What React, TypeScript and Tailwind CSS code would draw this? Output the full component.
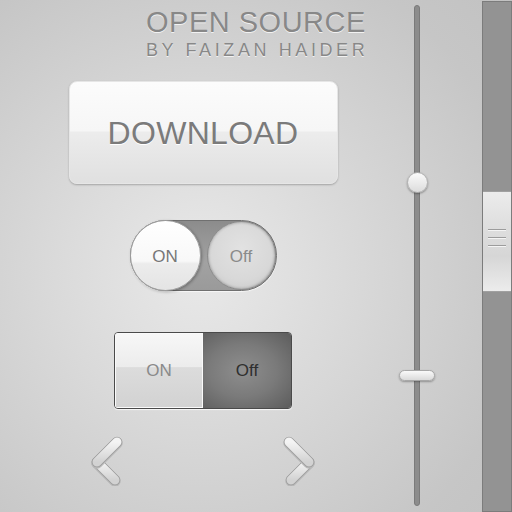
import React from "react";

const font = { fontFamily: '"Liberation Sans", Arial, sans-serif' };

function Chevron({ dir }: { dir: "left" | "right" }) {
  const pts =
    dir === "left"
      ? [
          [6, 26, 24, 44],
          [26, 6, 6, 26],
        ]
      : [
          [26, 26, 8, 44],
          [6, 6, 26, 26],
        ];
  const id = `cg-${dir}`;
  return (
    <svg width="32" height="50" viewBox="0 0 32 50">
      <defs>
        <linearGradient id={id} x1="0" y1="0" x2="0" y2="1">
          <stop offset="0" stopColor="#f4f4f4" />
          <stop offset="1" stopColor="#d2d2d2" />
        </linearGradient>
      </defs>
      {pts.map((p, i) => (
        <g key={i}>
          <line x1={p[0]} y1={p[1] + 1} x2={p[2]} y2={p[3] + 1} stroke="#b8b8b8" strokeWidth="11.5" strokeLinecap="round" />
          <line x1={p[0]} y1={p[1]} x2={p[2]} y2={p[3]} stroke="#9a9a9a" strokeWidth="10.5" strokeLinecap="round" />
          <line x1={p[0]} y1={p[1]} x2={p[2]} y2={p[3]} stroke={`url(#${id})`} strokeWidth="9" strokeLinecap="round" />
        </g>
      ))}
    </svg>
  );
}

export default function App() {
  return (
    <div
      className="w-[512px] h-[512px] flex overflow-hidden bg-[radial-gradient(circle_at_200px_270px,#e9e9e9_0%,#dadada_35%,#c6c6c6_80%,#c2c2c2_100%)]"
      style={font}
    >
      {/* Left column */}
      <div className="w-[406px] flex flex-col items-center">
        {/* Title */}
        <div className="self-start ml-[146px] mt-[8px] flex flex-col items-start text-[#888888] [text-shadow:0_1px_0_#f2f2f2]">
          <div className="text-[29px] leading-[29px] tracking-[0.5px]">OPEN SOURCE</div>
          <div className="text-[18px] leading-[18px] tracking-[3.6px] mt-[4px]">BY FAIZAN HAIDER</div>
        </div>

        {/* Download button */}
        <div className="mt-[22px] w-[269px] h-[103px] rounded-[8px] border border-[#e6e6e6] shadow-[0_1px_2px_rgba(0,0,0,0.25)] bg-[linear-gradient(to_bottom,#fcfcfc_0%,#f6f6f6_48%,#ececec_50%,#e0e0e0_100%)] flex items-center justify-center">
          <span className="text-[32px] text-[#7b7b7b] [text-shadow:0_1px_0_#ffffff] tracking-[0.3px]">DOWNLOAD</span>
        </div>

        {/* Round toggle */}
        <div className="mt-[36px] w-[147px] h-[71px] rounded-full relative border border-[#707070] bg-[linear-gradient(to_bottom,#8c8c8c,#a2a2a2_60%,#9a9a9a)] shadow-[0_1px_1px_rgba(255,255,255,0.7)]">
          <div className="absolute left-[-1px] top-[-1px] w-[71px] h-[71px] pt-[2px] rounded-full border border-[#a0a0a0] bg-[linear-gradient(to_bottom,#ffffff_0%,#f8f8f8_58%,#ececec_62%,#e4e4e4_100%)] shadow-[1px_1px_3px_rgba(0,0,0,0.3)] flex items-center justify-center">
            <span className="text-[17px] text-[#777]">ON</span>
          </div>
          <div className="absolute right-0 top-0 w-[69px] h-[69px] pt-[2px] rounded-full border border-[#8a8a8a] bg-[radial-gradient(circle_at_50%_40%,#e2e2e2_0%,#d8d8d8_60%,#c4c4c4_100%)] shadow-[inset_0_0_3px_rgba(0,0,0,0.35)] flex items-center justify-center">
            <span className="text-[17px] text-[#8a8a8a]">Off</span>
          </div>
        </div>

        {/* Square toggle */}
        <div className="mt-[41px] w-[178px] h-[77px] rounded-[4px] border border-[#4a4a4a] flex overflow-hidden shadow-[0_1px_1px_rgba(255,255,255,0.8)]">
          <div className="w-[88px] h-full border border-[#fafafa] bg-[linear-gradient(to_bottom,#f7f7f7_0%,#ececec_45%,#dcdcdc_46%,#d2d2d2_100%)] flex items-center justify-center">
            <span className="text-[17px] text-[#8a8a8a]">ON</span>
          </div>
          <div className="flex-1 h-full bg-[radial-gradient(ellipse_at_45%_50%,#8e8e8e_0%,#7a7a7a_50%,#5c5c5c_100%)] flex items-center justify-center">
            <span className="text-[17px] text-[#2f2f2f]">Off</span>
          </div>
        </div>

        {/* Arrows */}
        <div className="mt-[27px] w-[224px] flex justify-between">
          <Chevron dir="left" />
          <Chevron dir="right" />
        </div>
      </div>

      {/* Slider column */}
      <div className="w-[76px] relative">
        <div className="ml-[8px] mt-[5px] w-[6px] h-[501px] rounded-full bg-[#8c8c8c] border border-[#7a7a7a]" />
        <div className="absolute left-[1px] top-[172px] w-[21px] h-[21px] rounded-full border border-[#b0b0b0] bg-[linear-gradient(to_bottom,#fbfbfb,#dcdcdc)] shadow-[0_1px_2px_rgba(0,0,0,0.35)]" />
        <div className="absolute left-[-7px] top-[370px] w-[36px] h-[11px] rounded-full border border-[#a8a8a8] bg-[linear-gradient(to_bottom,#fafafa,#dadada)] shadow-[0_1px_2px_rgba(0,0,0,0.3)]" />
      </div>

      {/* Scrollbar */}
      <div className="w-[30px] h-[511px] mt-[1px] border border-[#7c7c7c] bg-[#939393] flex flex-col">
        <div className="mt-[189px] h-[101px] border-y border-[#a0a0a0] bg-[linear-gradient(to_bottom,#ececec_0%,#e0e0e0_30%,#d6d6d6_65%,#ececec_100%)] flex flex-col items-center justify-center gap-[6px]">
          <div className="w-[18px] h-[2px] border-t border-[#9c9c9c] border-b border-b-[#f4f4f4] -mt-[8px]" />
          <div className="w-[18px] h-[2px] border-t border-[#9c9c9c] border-b border-b-[#f4f4f4]" />
          <div className="w-[18px] h-[2px] border-t border-[#9c9c9c] border-b border-b-[#f4f4f4]" />
        </div>
      </div>
    </div>
  );
}
